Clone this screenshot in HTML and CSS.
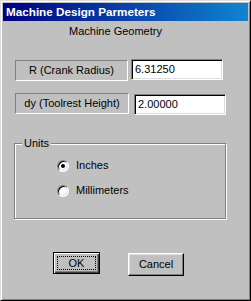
FILE: index.html
```html
<!DOCTYPE html>
<html>
<head>
<meta charset="utf-8">
<link rel="stylesheet" href="styles.css">
</head>
<body>
<div class="window">
  <div class="titlebar">Machine Design Parmeters</div>
  <div class="content">
    <div class="heading">Machine Geometry</div>
    <div class="row row1">
      <div class="label lbl1">R (Crank Radius)</div>
      <div class="edit">6.31250</div>
    </div>
    <div class="row row2">
      <div class="label lbl2">dy (Toolrest Height)</div>
      <div class="edit">2.00000</div>
    </div>
    <div class="group">
      <span class="legend">Units</span>
      <div class="radio-row"><span class="radio checked"></span><span class="rtext">Inches</span></div>
      <div class="radio-row"><span class="radio"></span><span class="rtext">Millimeters</span></div>
    </div>
    <div class="buttons">
      <div class="btn default"><span class="focus">OK</span></div>
      <div class="btn cancel">Cancel</div>
    </div>
  </div>
</div>
</body>
</html>
```
FILE: styles.css
```css
html, body {
  margin: 0;
  padding: 0;
  background: #c0c0c0;
}
.window {
  width: 251px;
  height: 301px;
  box-sizing: border-box;
  background: #c0c0c0;
  border: 1px solid;
  border-color: #dfdfdf #000 #000 #dfdfdf;
  box-shadow: inset 1px 1px #fff, inset -1px -1px #808080;
  padding: 2px;
  font-family: "Liberation Sans", Arial, sans-serif;
  font-size: 11px;
  color: #000;
}
.titlebar {
  height: 18px;
  line-height: 18px;
  padding-left: 3px;
  background: linear-gradient(to right, #000080, #1084d0);
  color: #fff;
  font-weight: bold;
  font-size: 11.7px;
  white-space: nowrap;
}
.content {
  display: flex;
  flex-direction: column;
}
.heading {
  margin-top: 4px;
  line-height: 13px;
  padding-left: 66px;
}
.row {
  display: flex;
  align-items: flex-start;
  padding-left: 12px;
}
.row1 {
  margin-top: 21px;
  gap: 3px;
}
.row1 .label { margin-top: 1px; width: 113px; }
.row2 {
  margin-top: 12px;
  gap: 5px;
}
.row2 .label { width: 114px; }
.row2 .edit { margin-top: 1px; }
.label {
  box-sizing: border-box;
  height: 21px;
  line-height: 19px;
  text-align: center;
  border: 1px solid;
  border-color: #808080 #fff #fff #808080;
  white-space: nowrap;
}
.edit {
  box-sizing: border-box;
  width: 92px;
  height: 21px;
  background: #fff;
  border: 1px solid;
  border-color: #808080 #fff #fff #808080;
  box-shadow: inset 1px 1px #000, inset -1px -1px #dfdfdf;
  line-height: 19px;
  padding-left: 3px;
}
.group {
  position: relative;
  box-sizing: border-box;
  margin-top: 28px;
  margin-left: 11px;
  width: 212px;
  height: 76px;
  border: 1px solid #808080;
  box-shadow: inset 1px 1px #fff, 1px 1px #fff;
  padding-top: 15px;
  padding-left: 42px;
  display: flex;
  flex-direction: column;
  gap: 12px;
}
.legend {
  position: absolute;
  left: 7px;
  top: -7px;
  padding: 0 2px;
  background: #c0c0c0;
  line-height: 13px;
}
.radio-row {
  display: flex;
  align-items: center;
  height: 13px;
}
.radio {
  position: relative;
  box-sizing: border-box;
  width: 12px;
  height: 12px;
  border-radius: 50%;
  background: #fff;
  border: 1px solid;
  border-color: #808080 #fff #fff #808080;
  box-shadow: inset 1px 1px #000, inset -1px -1px #dfdfdf;
}
.radio.checked::after {
  content: "";
  position: absolute;
  left: 3px;
  top: 3px;
  width: 4px;
  height: 4px;
  border-radius: 50%;
  background: #000;
}
.rtext {
  margin-left: 7px;
  line-height: 13px;
}
.buttons {
  display: flex;
  align-items: flex-start;
  margin-top: 33px;
  padding-left: 50px;
  gap: 28px;
}
.btn {
  box-sizing: border-box;
  height: 22px;
  text-align: center;
  line-height: 18px;
  background: #c0c0c0;
}
.btn.default {
  width: 47px;
  border: 1px solid #000;
  box-shadow: inset 1px 1px #fff, inset -1px -1px #404040, inset -2px -2px #808080;
  padding: 3px;
  line-height: 14px;
}
.focus {
  display: block;
  height: 14px;
  border: 1px dotted #000;
  box-sizing: border-box;
  line-height: 12px;
}
.btn.cancel {
  width: 56px;
  height: 23px;
  margin-top: 1px;
  border: 1px solid;
  border-color: #fff #000 #000 #fff;
  box-shadow: inset -1px -1px #808080, inset 1px 1px #dfdfdf;
  line-height: 21px;
}
```
